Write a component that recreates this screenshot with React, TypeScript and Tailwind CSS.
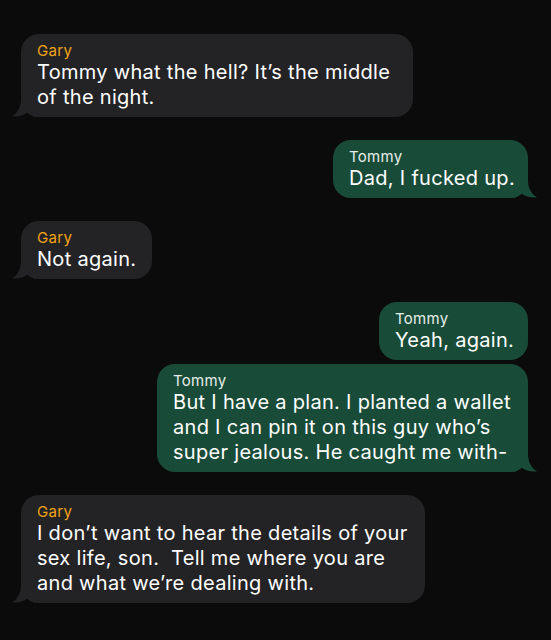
import React from "react";

type Msg = {
  from: "Gary" | "Tommy";
  lines: string[];
  w: string;
  tail: boolean;
  gap: string;
};

const msgs: Msg[] = [
  { from: "Gary", lines: ["Tommy what the hell? It’s the middle", "of the night."], w: "w-[392px]", tail: true, gap: "mt-0" },
  { from: "Tommy", lines: ["Dad, I fucked up."], w: "w-[195px]", tail: true, gap: "mt-[23px]" },
  { from: "Gary", lines: ["Not again."], w: "w-[131px]", tail: true, gap: "mt-[23px]" },
  { from: "Tommy", lines: ["Yeah, again."], w: "w-[149px]", tail: false, gap: "mt-[23px]" },
  {
    from: "Tommy",
    lines: ["But I have a plan. I planted a wallet", "and I can pin it on this guy who’s", "super jealous. He caught me with-"],
    w: "w-[371px]",
    tail: true,
    gap: "mt-[4px]",
  },
  {
    from: "Gary",
    lines: ["I don’t want to hear the details of your", "sex life, son.  Tell me where you are", "and what we’re dealing with."],
    w: "w-[404px]",
    tail: true,
    gap: "mt-[23px]",
  },
];

function Tail({ right, color }: { right: boolean; color: string }) {
  return (
    <svg
      width="24"
      height="22"
      viewBox="0 0 24 22"
      className={right ? "absolute -right-[9px] bottom-0 -scale-x-100" : "absolute -left-[9px] bottom-0"}
    >
      <path
        d="M9 0 L9 4 C9 12.5 5.5 18 0 21.3 C6 22 11.5 20.5 15.5 17.8 C18.5 20.5 21.5 22 24 22 L24 0 Z"
        fill={color}
      />
    </svg>
  );
}

export default function App() {
  return (
    <div
      className="min-h-[640px] w-[551px] bg-[#0b0b0b] pt-[34px] pl-[21px] pr-[23px] flex flex-col"
      style={{ fontFamily: "Inter, 'Noto Sans', sans-serif" }}
    >
      {msgs.map((m, i) => {
        const right = m.from === "Tommy";
        const bg = right ? "#184b38" : "#232325";
        return (
          <div key={i} className={`${m.gap} flex ${right ? "justify-end" : "justify-start"}`}>
            <div
              className={`relative ${m.w} rounded-[18px] px-4 pt-[7px] pb-[7px] ${
                right ? "bg-[#184b38]" : "bg-[#232325]"
              }`}
            >
              {m.tail && <Tail right={right} color={bg} />}
              <div
                className={`relative text-[15px] leading-[19px] tracking-[0.3px] ${
                  right ? "text-[#e6eee9]" : "text-[#f2a414]"
                }`}
              >
                {m.from}
              </div>
              <div className="relative text-[20px] leading-[25px] text-white whitespace-nowrap tracking-[0.3px]">
                {m.lines.map((l, j) => (
                  <div key={j} className="whitespace-pre">{l}</div>
                ))}
              </div>
            </div>
          </div>
        );
      })}
    </div>
  );
}
